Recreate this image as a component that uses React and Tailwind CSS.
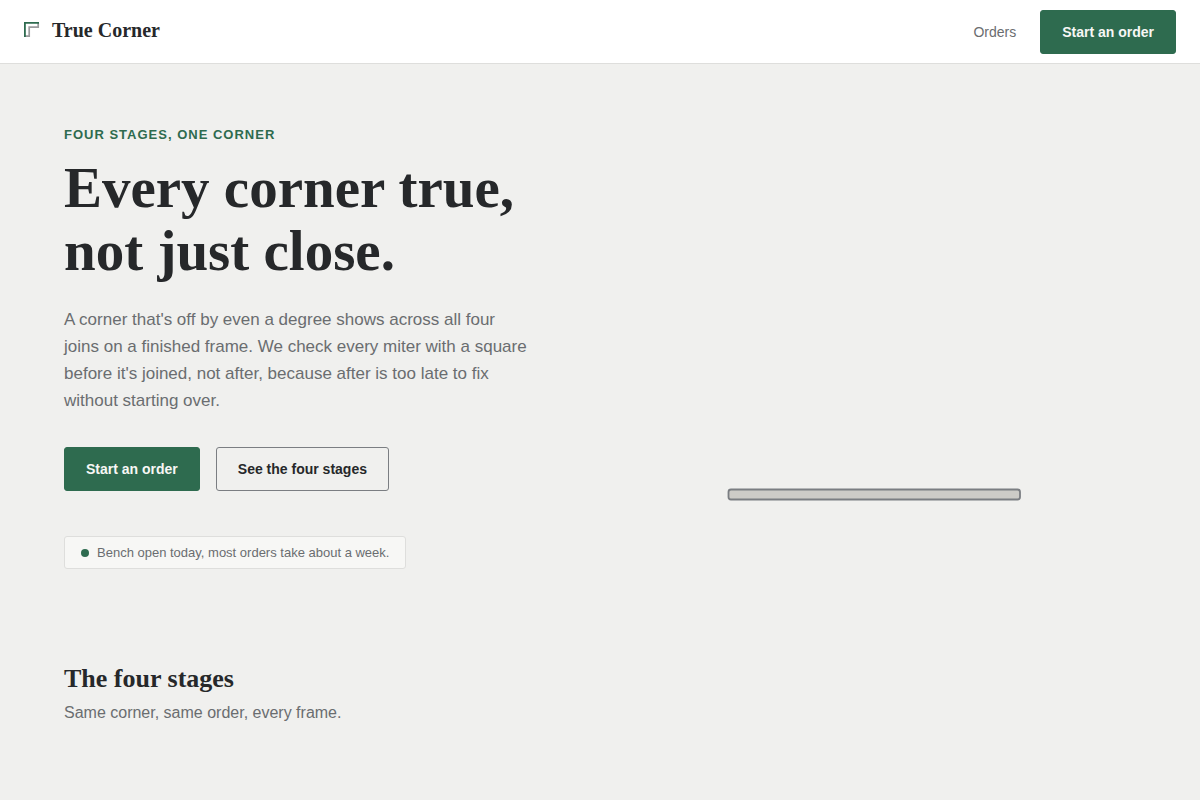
import clsx from "clsx";

const SERIF = "font-['Liberation_Serif',serif]";

const CornerMark = () => (
  <svg viewBox="0 0 16 16" className="h-4 w-4" fill="none" aria-hidden="true">
    <path d="M1 14.2h4.2V5.2h9V1" stroke="#9a9b9d" strokeWidth="1.7" />
    <path d="M0.9 15V0.9H15" stroke="#2e6b4f" strokeWidth="1.8" />
  </svg>
);

const Button = ({ variant = "primary", children }) => (
  <button
    type="button"
    className={clsx(
      "h-11 cursor-pointer rounded-[3px] border px-[21px] text-sm font-semibold whitespace-nowrap",
      variant === "primary"
        ? "border-[#2e6b4f] bg-[#2e6b4f] text-[#f7f7f5]"
        : "border-[#7b7e82] bg-transparent text-[#26282a]"
    )}
  >
    {children}
  </button>
);

const Header = () => (
  <header className="flex h-16 items-center justify-between border-b border-[#dededc] bg-white px-6">
    <a href="#top" className="flex items-center gap-3 pb-1">
      <CornerMark />
      <span className={clsx(SERIF, "text-xl font-semibold")}>True Corner</span>
    </a>
    <nav className="flex items-center gap-6">
      <a href="#orders" className="text-sm text-[#6a6d70]">
        Orders
      </a>
      <Button>Start an order</Button>
    </nav>
  </header>
);

const FrameRail = () => (
  <svg viewBox="0 0 512 440" className="w-full" role="img" aria-label="Frame rail">
    <rect x="104.5" y="360.5" width="291.5" height="10" rx="2.5" fill="#cdccc7" stroke="#7b7e82" strokeWidth="1.8" />
  </svg>
);

const Hero = () => (
  <section id="top" className="grid grid-cols-2 items-center gap-12 px-16 pt-16 pb-[94px]">
    <div>
      <p className="text-[13px] leading-[14px] font-semibold tracking-[1px] text-[#2e6b4f] uppercase">
        Four stages, one corner
      </p>
      <h1 className={clsx(SERIF, "mt-3.5 text-[57px] leading-[63px] font-semibold")}>
        Every corner true,
        <br />
        not just close.
      </h1>
      <p className="mt-6 max-w-[464px] text-[17px] leading-[27px] text-[#6a6d70]">
        A corner that's off by even a degree shows across all four joins on a finished frame. We check every miter
        with a square before it's joined, not after, because after is too late to fix without starting over.
      </p>
      <div className="mt-[33px] flex gap-4">
        <Button>Start an order</Button>
        <Button variant="outline">See the four stages</Button>
      </div>
      <p className="mt-[45px] flex w-fit items-center gap-2 rounded-[3px] border border-[#dededc] bg-[#f7f7f5] px-4 py-1.5 text-[13px] leading-[19px] text-[#6a6d70]">
        <span className="h-2 w-2 rounded-full bg-[#2e6b4f]" />
        Bench open today, most orders take about a week.
      </p>
    </div>
    <FrameRail />
  </section>
);

const Stages = () => (
  <section id="stages" className="px-16 pb-16">
    <h2 className={clsx(SERIF, "text-[26px] leading-8 font-semibold")}>The four stages</h2>
    <p className="mt-1.5 text-base text-[#6a6d70]">Same corner, same order, every frame.</p>
  </section>
);

const App = () => (
  <div className="min-h-screen bg-[#f0f0ee] font-['Liberation_Sans',sans-serif] text-[#26282a]">
    <Header />
    <main>
      <Hero />
      <Stages />
    </main>
  </div>
);

export default App;
